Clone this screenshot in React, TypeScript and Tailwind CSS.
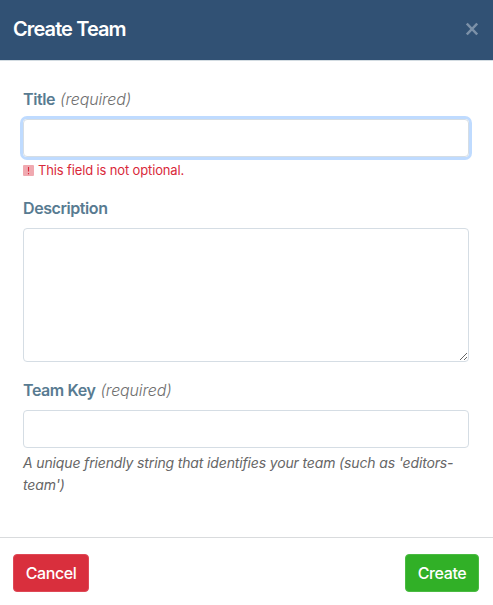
import { useState } from 'react';

interface LabelProps {
  htmlFor: string;
  text: string;
  required?: boolean;
}

function FieldLabel({ htmlFor, text, required = false }: LabelProps) {
  return (
    <label htmlFor={htmlFor} className="mb-2 block text-base leading-6 font-semibold tracking-[-0.42px] text-[#587b91]">
      {text}
      {required && <em className="ml-[5px] font-light tracking-[-0.15px] text-[#6f6f6f]">(required)</em>}
    </label>
  );
}

export default function App() {
  const [title, setTitle] = useState('');
  const [description, setDescription] = useState('');
  const [teamKey, setTeamKey] = useState('');

  return (
    <div className="flex h-[605px] w-full flex-col bg-white font-['Inter',sans-serif]">
      <header className="flex h-[61px] items-center justify-between border-b border-[#d3dce2] bg-[#315174] px-[13px] pb-0.5">
        <h1 className="text-xl leading-[30px] font-semibold tracking-[-0.9px] text-white">Create Team</h1>
        <button type="button" aria-label="Close" className="mr-[2px] text-[#7c91a8]">
          <svg width="12" height="14" viewBox="0 0 12 14" fill="none" stroke="currentColor" strokeWidth="2.5">
            <path d="M0.8 1.5L11.2 12.5M11.2 1.5L0.8 12.5" />
          </svg>
        </button>
      </header>

      <main className="flex-1 px-[23px] pt-[26px]">
        <div className="mb-4">
          <FieldLabel htmlFor="title" text="Title" required />
          <input
            id="title"
            value={title}
            onChange={(e) => setTitle(e.target.value)}
            className="block h-[38px] w-[446px] rounded-[4px] border border-[#d5dde4] px-3 shadow-[0_0_0_3px_#bfdbff] outline-none"
          />
          <p className="mt-1 flex h-[19px] items-center text-[13px] leading-[19px] tracking-[-0.14px] text-[#d9293a]">
            <svg width="11" height="11" viewBox="0 0 11 11" className="mr-1 shrink-0">
              <rect width="11" height="11" rx="1" fill="#f0a9b0" />
              <path d="M5.5 2v4.5M5.5 8v1.2" stroke="#d9293a" strokeWidth="1.1" />
            </svg>
            This field is not optional.
          </p>
        </div>

        <div className="mb-4">
          <FieldLabel htmlFor="description" text="Description" />
          <textarea
            id="description"
            value={description}
            onChange={(e) => setDescription(e.target.value)}
            className="block h-[134px] w-[446px] resize-y rounded-[4px] border border-[#d5dde4] px-3 py-1.5 outline-none"
          />
        </div>

        <div>
          <FieldLabel htmlFor="team-key" text="Team Key" required />
          <input
            id="team-key"
            value={teamKey}
            onChange={(e) => setTeamKey(e.target.value)}
            className="block h-[38px] w-[446px] rounded-[4px] border border-[#d5dde4] px-3 outline-none"
          />
          <p className="mt-1 w-[446px] text-sm leading-[22px] tracking-[-0.145px] text-[#666] italic">
            A unique friendly string that identifies your team (such as 'editors-<wbr />team')
          </p>
        </div>
      </main>

      <footer className="flex h-[68px] items-start justify-between border-t border-[#d9dbdd] pt-4 pr-3.5 pl-[13px]">
        <button type="button" className="h-[38px] w-[76px] rounded-[4px] border border-[#df4856] bg-[#d92f3d] text-base font-medium tracking-[-0.4px] text-white">
          Cancel
        </button>
        <button type="button" className="h-[38px] w-[74px] rounded-[4px] border border-[#4abb42] bg-[#31b027] text-base font-medium tracking-[-0.4px] text-white">
          Create
        </button>
      </footer>
    </div>
  );
}
